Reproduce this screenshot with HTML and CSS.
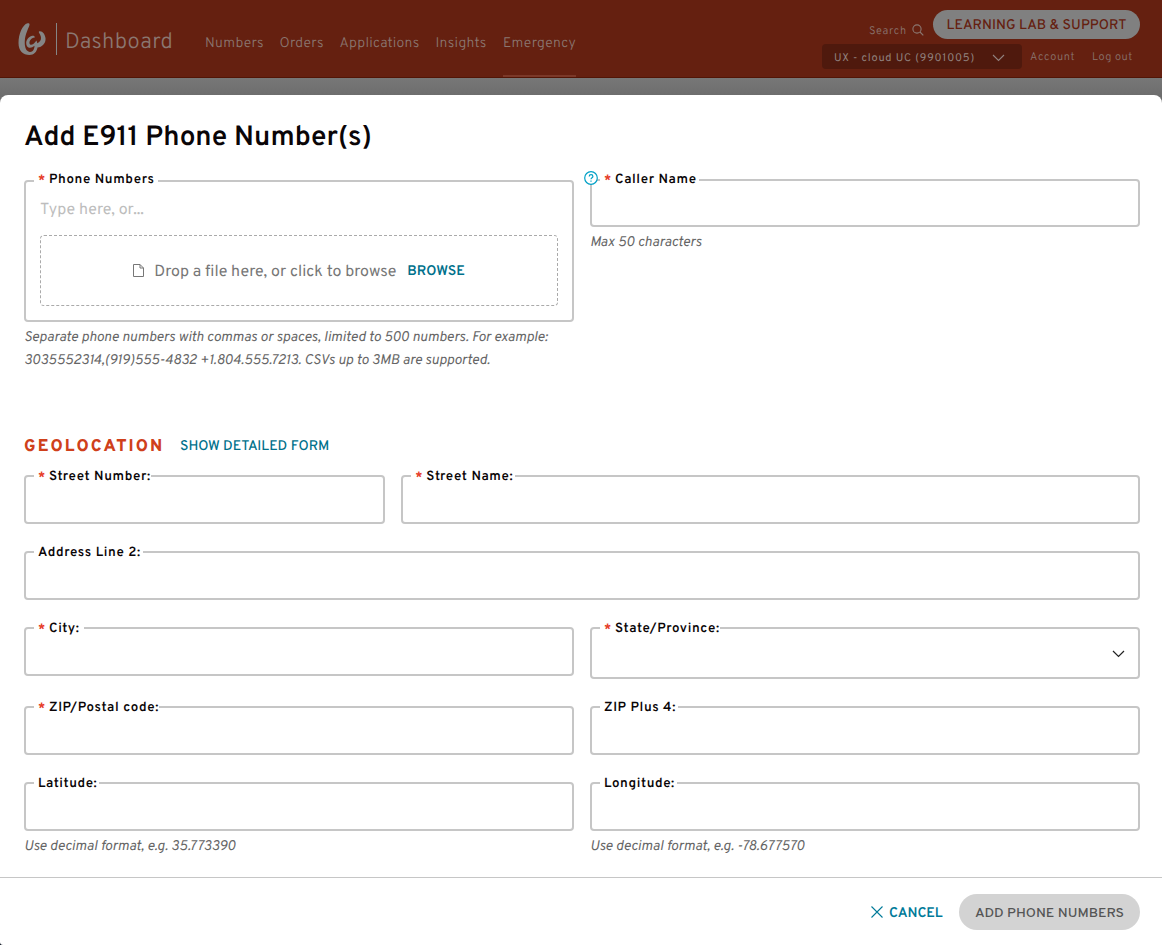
FILE: index.html
```
<!DOCTYPE html>
<html lang="en">
<head>
  <meta charset="UTF-8">
  <meta name="viewport" content="width=device-width, initial-scale=1.0">
  <title>Dashboard - Add E911 Phone Number(s)</title>
  <link rel="stylesheet" href="styles.css">
</head>
<body>
  <header class="topbar">
    <div class="brand">
      <svg class="logo" width="28" height="32" viewBox="0 0 28 32">
        <path fill="#858585" d="M9.500 .2C4.500 1.500 .5 11 .5 20C.5 28 5 32 11.500 32C16 32 19 28.500 19.500 24.500C24.500 24 28 20 27.500 15C27 11 24.500 7.800 21.500 8.200C20.500 8.500 20.700 9.300 21.300 10.200C24 14 23.500 18.500 19.300 20.300L18.500 17.500L16.800 19.600C14.800 22 12.200 22.700 11.500 20.500C11 18 13.500 14.500 16.500 14.800C17.300 13.200 15.500 12.500 13.500 13C8.500 14.500 7 20.500 9.200 23.500C10.800 25.500 14 25 16.500 22.800C16.500 26.500 14.500 29.300 11.800 29C7.500 28.500 6.500 23 6.800 18C7.200 11 10.500 5.500 11.500 2C11.700 .5 11 -.1 9.500 .2Z"/>
      </svg>
      <span class="brand-line"></span>
      <span class="brand-name">Dashboard</span>
    </div>
    <nav class="main-nav">
      <a class="nav-numbers">Numbers</a>
      <a class="nav-orders">Orders</a>
      <a class="nav-apps">Applications</a>
      <a class="nav-insights">Insights</a>
      <a class="nav-emergency active">Emergency</a>
    </nav>
    <div class="tools">
      <div class="tools-row">
        <span class="search">Search</span>
        <svg class="search-icon" width="12" height="12" viewBox="0 0 12 12" fill="none" stroke="#8b7771" stroke-width="1.1"><circle cx="5" cy="5" r="4.100"/><path d="M8 8l3.300 3.300"/></svg>
        <a class="support">LEARNING LAB &amp; SUPPORT</a>
      </div>
      <div class="tools-row">
        <div class="account-select">
          <span>UX - cloud UC (9901005)</span>
          <svg width="13" height="8" viewBox="0 0 13 8" fill="none" stroke="#91827f" stroke-width="1.1"><path d="M1 1l5.500 5.500L12 1"/></svg>
        </div>
        <a class="account">Account</a>
        <a class="logout">Log out</a>
      </div>
    </div>
  </header>

  <main class="modal">
    <form class="modal-body">
      <h1>Add E911 Phone Number(s)</h1>

      <div class="grid halves numbers">
        <div class="phone-col">
          <div class="field phone-field">
            <label class="l-phone"><i>*</i>Phone Numbers</label>
            <div class="placeholder">Type here, or...</div>
            <div class="dropzone">
              <svg width="11" height="13" viewBox="0 0 11 13" fill="none" stroke="#777" stroke-width="1"><path d="M.5 .5h6.500l3.500 3.500v8.500H.5zM7 .5v3.500h3.500"/></svg>
              <span class="drop-text">Drop a file here, or click to browse</span>
              <a class="browse">BROWSE</a>
            </div>
          </div>
          <p class="hint">Separate phone numbers with commas or spaces, limited to 500 numbers. For example:<br>3035552314,(919)555-4832 +1.804.555.7213. CSVs up to 3MB are supported.</p>
        </div>
        <div>
          <div class="field caller-field">
            <svg class="help" width="14" height="14" viewBox="0 0 14 14" fill="none" stroke="#00a0c6" stroke-width="1.200"><circle cx="7" cy="7" r="6.300" fill="#fff"/><path d="M5.200 5.500c0-2.400 3.700-2.400 3.700 0C8.900 6.800 7 6.800 7 8.300M7 9.500v1.300"/></svg>
            <label class="l-caller"><i>*</i>Caller Name</label>
          </div>
          <p class="hint">Max 50 characters</p>
        </div>
      </div>

      <div class="section-head">
        <h2>GEOLOCATION</h2>
        <a>SHOW DETAILED FORM</a>
      </div>

      <div class="address">
        <div class="grid thirds">
          <div class="field"><label class="tight"><i>*</i>Street Number:</label></div>
          <div class="field wide"><label><i>*</i>Street Name:</label></div>
        </div>
        <div class="grid">
          <div class="field"><label>Address Line 2:</label></div>
        </div>
        <div class="grid halves">
          <div class="field"><label class="l-city"><i>*</i>City:</label></div>
          <div class="field select">
            <label class="tight"><i>*</i>State/Province:</label>
            <svg width="13" height="8" viewBox="0 0 13 8" fill="none" stroke="#222" stroke-width="1.200"><path d="M1 1l5.500 5.500L12 1"/></svg>
          </div>
        </div>
        <div class="grid halves">
          <div class="field"><label class="tight"><i>*</i>ZIP/Postal code:</label></div>
          <div class="field"><label>ZIP Plus 4:</label></div>
        </div>
        <div class="grid halves">
          <div>
            <div class="field"><label>Latitude:</label></div>
            <p class="hint hint-format">Use decimal format, e.g. 35.773390</p>
          </div>
          <div>
            <div class="field"><label>Longitude:</label></div>
            <p class="hint hint-format">Use decimal format, e.g. -78.677570</p>
          </div>
        </div>
      </div>
    </form>

    <footer class="modal-footer">
      <a class="cancel">
        <svg width="12" height="12" viewBox="0 0 12 12" fill="none" stroke="#007a99" stroke-width="1.100"><path d="M.5 .5l11 11M11.500 .5l-11 11"/></svg>
        <span>CANCEL</span>
      </a>
      <button type="button" disabled>ADD PHONE NUMBERS</button>
    </footer>
  </main>
</body>
</html>
```
FILE: styles.css
```
* {
  box-sizing: border-box;
}
body {
  margin: 0;
  height: 945px;
  display: flex;
  flex-direction: column;
  overflow: hidden;
  font-family: Overpass, Roboto, "Liberation Sans", sans-serif;
  text-rendering: geometricPrecision;
  background: linear-gradient(#777 78px, #6d6d6d 96px, #6d6d6d 300px, #0c1420 900px);
  color: #0a0507;
}
h1, h2, p {
  margin: 0;
}
.topbar {
  height: 78px;
  flex: none;
  display: flex;
  background: #652010;
  border-bottom: 1px solid #521506;
  color: #8b7771;
  font-weight: 300;
}
.brand {
  display: flex;
  align-items: center;
  width: 205px;
  padding-left: 18px;
}
.brand-line {
  width: 1px;
  height: 32px;
  margin: 0 8px 0 10px;
  background: #858585;
}
.brand-name {
  font-size: 22px;
  letter-spacing: 0.3px;
  line-height: 32px;
  margin-top: 11px;
}
.main-nav {
  display: flex;
  gap: 16px;
  font-size: 14px;
  letter-spacing: 0.3px;
}
.main-nav a {
  padding-top: 35px;
  height: 77px;
  line-height: 20px;
  white-space: nowrap;
}
.main-nav .active {
  border-bottom: 2px solid #7b3828;
}
.nav-numbers { width: 58.500px; }
.nav-orders { width: 44px; }
.nav-apps { width: 80px; }
.nav-insights { width: 51.500px; }
.nav-emergency { width: 73px; }
.tools {
  margin-left: auto;
  padding: 10px 22px 0 0;
  width: 340px;
  white-space: nowrap;
}
.tools-row {
  display: flex;
  height: 34px;
  font-size: 11px;
  line-height: 28px;
  letter-spacing: 0.7px;
}
.search {
  width: 39px;
  margin: 8px 4px 0 47px;
}
.search-icon {
  margin: 14px 9px 0 0;
}
.support {
  width: 207px;
  height: 29px;
  border-radius: 15px;
  background: #808080;
  color: #652010;
  font-size: 14px;
  font-weight: 500;
  line-height: 33px;
  letter-spacing: 0.05px;
  text-align: center;
}
.account-select {
  display: flex;
  justify-content: space-between;
  align-items: center;
  width: 200px;
  height: 25px;
  padding: 2px 17px 0 12px;
  border-radius: 4px;
  background: #4f190d;
  color: #91827f;
  font-weight: 400;
  letter-spacing: 0.78px;
}
.account-select span {
  padding-top: 2px;
}
.account {
  width: 46px;
  margin: 0 16px 0 8px;
}
.logout {
  letter-spacing: 0.5px;
}
.modal {
  flex: 1;
  margin-top: 17px;
  display: flex;
  flex-direction: column;
  border-radius: 8px 8px 0 3px;
  background: #fff;
}
.modal-body {
  height: 782px;
  padding: 24px 22px 0 24px;
}
h1 {
  font-size: 28px;
  font-weight: 600;
  line-height: 38px;
}
.grid {
  display: grid;
  column-gap: 16px;
}
.halves {
  grid-template-columns: 1fr 1fr;
}
.thirds {
  grid-template-columns: repeat(3, 1fr);
}
.wide {
  grid-column: span 2;
}
.numbers {
  margin-top: 22px;
  height: 250px;
  align-items: start;
}
.field {
  position: relative;
  height: 49px;
  border: 2px solid #c6c6c6;
  border-radius: 4px;
}
.field label {
  position: absolute;
  left: 8px;
  top: -9px;
  height: 20px;
  padding: 0 2px 0 4px;
  background: #fff;
  font-size: 13.300px;
  font-weight: 600;
  line-height: 20px;
  letter-spacing: 0.6px;
  white-space: nowrap;
}
.field .l-phone {
  top: -11px;
  padding-right: 3px;
}
.field .l-caller {
  top: -10px;
}
.field .l-city {
  padding-right: 4px;
}
.field .tight {
  padding-right: 0;
}
.field label i {
  display: inline-block;
  width: 11px;
  color: #e63c28;
  font-style: normal;
  line-height: 16px;
  vertical-align: -1px;
}
.phone-col {
  padding-top: 1px;
}
.phone-field {
  height: 142px;
  padding: 14px;
}
.placeholder {
  height: 39px;
  padding-top: 5px;
  font-size: 16px;
  line-height: 20px;
  color: #bdbdbd;
}
.dropzone {
  display: flex;
  align-items: center;
  justify-content: center;
  height: 71px;
  border: 1px dashed #aaa;
  border-radius: 4px;
  color: #777;
}
.drop-text {
  margin: 0 11px 0 10px;
  padding-top: 4px;
  font-size: 16px;
  letter-spacing: 0.03px;
}
.browse {
  padding-top: 4px;
}
.browse,
.section-head a {
  color: #00718c;
  font-size: 14px;
  font-weight: 600;
}
.caller-field {
  height: 48px;
}
.help {
  position: absolute;
  left: -8px;
  top: -10px;
}
.hint {
  padding-top: 5px;
  font-size: 14px;
  font-style: italic;
  line-height: 23px;
  letter-spacing: -0.01px;
  color: #666;
  white-space: nowrap;
}
.hint-format {
  letter-spacing: 0.04px;
}
.section-head {
  display: flex;
  align-items: center;
  height: 24px;
  margin-top: 6px;
}
h2 {
  width: 156px;
  font-size: 17px;
  font-weight: 800;
  line-height: 22px;
  letter-spacing: 2.100px;
  color: #cf401b;
}
.section-head a {
  font-weight: 500;
}
.address {
  display: flex;
  flex-direction: column;
  gap: 27px;
  margin-top: 16px;
}
.select {
  height: 52px;
  display: flex;
  align-items: center;
  justify-content: flex-end;
  padding: 2px 13px 0 0;
}
.modal-footer {
  flex: 1;
  display: flex;
  justify-content: flex-end;
  align-items: flex-start;
  padding: 16px 22px 0;
  border-top: 1px solid #c6c6c6;
}
.cancel {
  display: flex;
  align-items: center;
  height: 36px;
  color: #007a99;
  font-size: 14px;
  font-weight: 600;
}
.cancel span {
  width: 54px;
  margin: 0 16px 0 6px;
  padding-top: 4px;
}
button {
  width: 181px;
  height: 36px;
  padding: 3px 0 0;
  border: 0;
  border-radius: 18px;
  background: #d3d3d3;
  color: #555;
  font-family: inherit;
  font-size: 14px;
  font-weight: 500;
}
```
